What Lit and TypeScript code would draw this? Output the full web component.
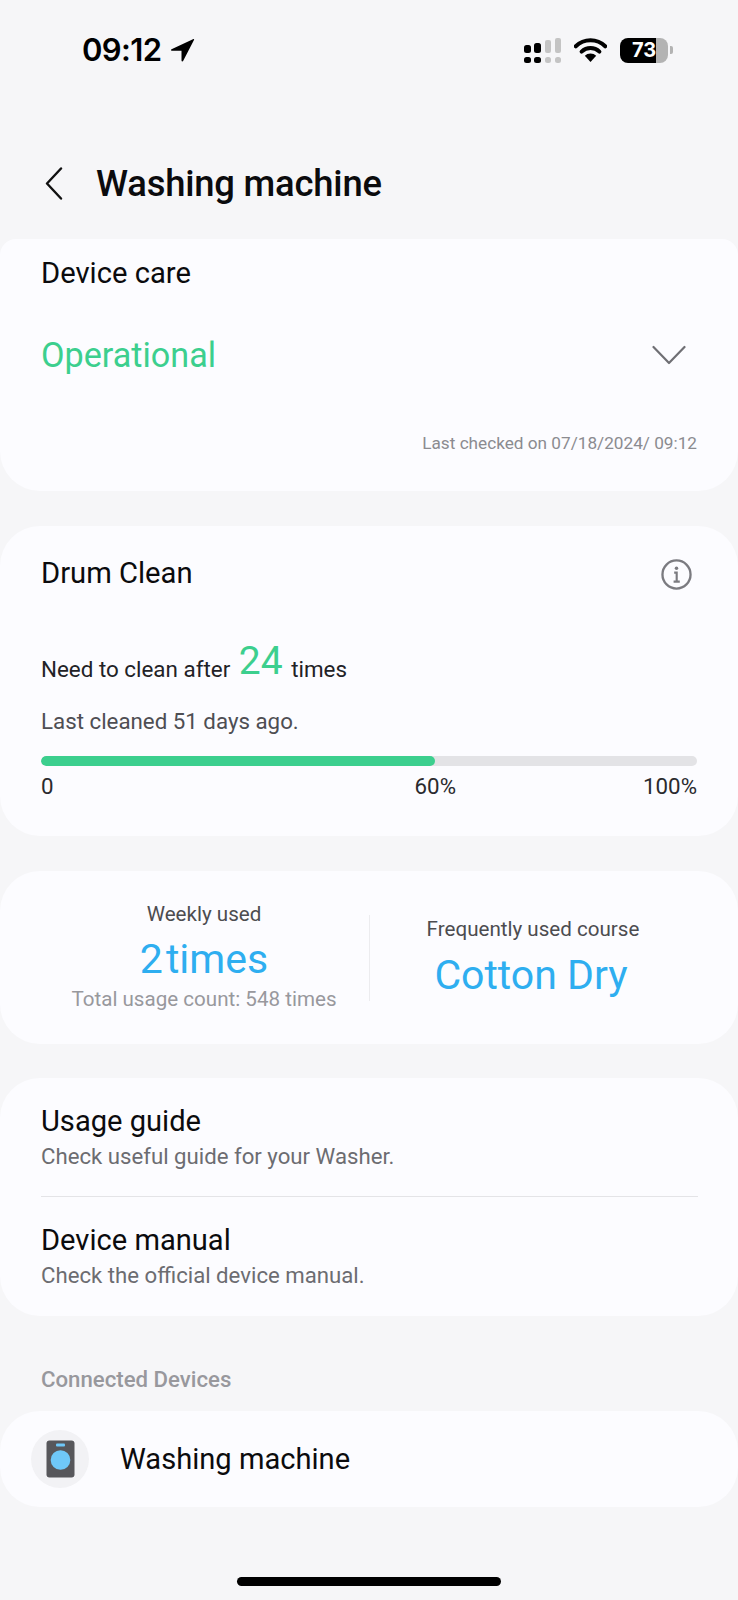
import { LitElement, html, css } from 'lit';
import { customElement } from 'lit/decorators.js';

@customElement('app-root')
export class AppRoot extends LitElement {
  static styles = css`
    :host {
      display: block;
      width: 738px;
      height: 1600px;
      overflow: hidden;
      background: #f6f6f8;
      font-family: Roboto, 'Liberation Sans', sans-serif;
      color: #0b0b0d;
    }

    .status {
      height: 100px;
      box-sizing: border-box;
      padding: 31px 65px 0 82px;
      display: flex;
      justify-content: space-between;
      align-items: flex-start;
    }
    .time {
      display: flex;
      align-items: center;
      gap: 8px;
      font-family: Inter, sans-serif;
      font-size: 31px;
      line-height: 38px;
      font-weight: 600;
      letter-spacing: -0.6px;
      color: #000;
    }
    .indicators {
      display: flex;
      align-items: center;
      gap: 13px;
      height: 38px;
    }
    .battery {
      width: 48px;
      height: 25px;
      border-radius: 8px;
      overflow: hidden;
      background: linear-gradient(90deg, #000 0 75%, #b3b3b3 75%);
      color: #fff;
      font-family: Inter, sans-serif;
      font-size: 20px;
      font-weight: 700;
      line-height: 25px;
      text-align: center;
    }
    .nub {
      width: 3px;
      height: 8px;
      margin-left: -11px;
      border-radius: 0 2px 2px 0;
      background: #b3b3b3;
    }

    .header {
      height: 139px;
      box-sizing: border-box;
      padding: 28px 0 0 45px;
      display: flex;
      align-items: center;
      gap: 33px;
    }
    .header svg { display: block; }
    h1 {
      margin: 0;
      font-size: 36.4px;
      font-weight: 500;
      letter-spacing: -0.2px;
    }

    .card {
      background: #fcfcff;
      border-radius: 40px;
      margin-bottom: 35px;
      box-sizing: border-box;
    }

    .care {
      height: 252px;
      padding: 16px 41px 0 41px;
      border-radius: 16px 16px 40px 40px;
    }
    .card-title { font-size: 29.2px; line-height: 36px; }
    .care-row {
      display: flex;
      justify-content: space-between;
      align-items: center;
      margin-top: 42px;
      padding-right: 11px;
    }
    .operational { font-size: 34.2px; line-height: 44px; color: #3ccf8e; }
    .checked {
      margin-top: 54px;
      text-align: right;
      font-size: 17.2px;
      line-height: 24px;
      color: #8b8b90;
    }

    .drum {
      height: 310px;
      padding: 29px 41px 0 41px;
    }
    .drum-head {
      display: flex;
      justify-content: space-between;
      align-items: center;
      padding-right: 5px;
    }
    .drum-head svg { margin-top: 2px; }
    .need {
      margin-top: 44px;
      font-size: 22.4px;
      line-height: 52px;
      color: #222226;
    }
    .need b { font-weight: 400; font-size: 39px; color: #3ccf8e; margin: 0 3px; vertical-align: 3px; }
    .last { margin-top: 11px; font-size: 22.3px; line-height: 30px; color: #4e4e53; }
    .track {
      height: 10px;
      margin-top: 20px;
      border-radius: 5px;
      background: #e3e3e6;
      overflow: hidden;
    }
    .fill { height: 100%; background: #3ccf8e; border-radius: 5px; }
    .scale {
      display: flex;
      margin-top: 6px;
      font-size: 22.3px;
      line-height: 28px;
      color: #2a2a2e;
    }
    .scale span:nth-child(1) { width: 0; }
    .scale span:nth-child(2) { margin-left: calc(60% - 20px); }
    .scale span:nth-child(3) { margin-left: auto; }

    .usage {
      height: 173px;
      margin-bottom: 34px;
      display: grid;
      grid-template-columns: 369px 1px 1fr;
      align-items: center;
    }
    .stat {
      display: flex;
      flex-direction: column;
      align-items: center;
      margin-top: -3px;
      padding-left: 39px;
    }
    .stat.right { margin-top: 0; padding: 0 46px 0 0; }
    .stat-label { font-size: 20.6px; line-height: 28px; color: #4c4c50; }
    .stat.right .stat-label { margin-left: 4px; }
    .stat-value { font-size: 41px; line-height: 52px; color: #2eaef0; margin-top: 5px; }
    .stat-value i { font-style: normal; margin-right: 3px; }
    .stat.right .stat-value { margin-top: 6px; }
    .stat-note { font-size: 20.6px; line-height: 26px; color: #98989d; margin-top: 1px; }
    .divider { height: 86px; background: #ececef; }

    .links { height: 238px; padding: 0 40px 0 41px; }
    .link { height: 118px; box-sizing: border-box; padding-top: 25px; }
    .link + .link { border-top: 1px solid #e4e4e7; height: 120px; padding-top: 25px; }
    .link-title { font-size: 29.1px; line-height: 36px; }
    .link-sub { font-size: 22.2px; line-height: 28px; color: #6c6c71; margin-top: 3px; }

    .section {
      margin: 49px 0 18px 41px;
      font-size: 22.2px;
      line-height: 28px;
      font-weight: 500;
      color: #98989d;
    }

    .device {
      height: 96px;
      padding-left: 31px;
      display: flex;
      align-items: center;
      gap: 31px;
      font-size: 29.1px;
    }
    .device-icon {
      width: 58px;
      height: 58px;
      border-radius: 50%;
      background: #f2f2f5;
      display: flex;
      align-items: center;
      justify-content: center;
    }

    .home {
      width: 264px;
      height: 9px;
      margin: 70px auto 0;
      border-radius: 5px;
      background: #000;
    }
  `;

  render() {
    return html`
      <div class="status">
        <div class="time">
          09:12
          <svg width="25" height="24" viewBox="0 0 24 24">
            <path d="M23 1 1 11.2c-.9.4-.6 1.5.3 1.5H11v9.8c0 1 1.2 1.2 1.6.4L23.6 1.7c.2-.5-.2-.9-.6-.7z" fill="#000" />
          </svg>
        </div>
        <div class="indicators">
          <svg width="37" height="25" viewBox="0 0 37 25">
            <rect x="0" y="7" width="7" height="8" rx="2.5" fill="#000" />
            <rect x="10" y="5" width="7" height="10" rx="2.5" fill="#000" />
            <rect x="21" y="2" width="6" height="13" rx="2" fill="#c4c4c4" />
            <rect x="31" y="0" width="6" height="15" rx="2" fill="#c4c4c4" />
            <rect x="0" y="19" width="7" height="6" rx="2.5" fill="#000" />
            <rect x="10" y="19" width="7" height="6" rx="2.5" fill="#000" />
            <rect x="21" y="19" width="6" height="6" rx="2.5" fill="#c4c4c4" />
            <rect x="31" y="19" width="6" height="6" rx="2.5" fill="#c4c4c4" />
          </svg>
          <svg width="33" height="24" viewBox="0 0 33 24">
            <path d="M1.8 8.3a21 21 0 0 1 29.4 0" fill="none" stroke="#000" stroke-width="4" stroke-linecap="round" />
            <path d="M7.6 13.6a13 13 0 0 1 17.8 0" fill="none" stroke="#000" stroke-width="4" stroke-linecap="round" />
            <path d="M10.8 17.8a8 8 0 0 1 11.4 0L16.5 24z" fill="#000" />
          </svg>
          <div class="battery">73</div>
          <div class="nub"></div>
        </div>
      </div>

      <div class="header">
        <svg width="18" height="33" viewBox="0 0 18 33">
          <path d="M16 1.5 2 16.5l14 15" fill="none" stroke="#111" stroke-width="2.4" stroke-linecap="round" stroke-linejoin="round" />
        </svg>
        <h1>Washing machine</h1>
      </div>

      <div class="card care">
        <div class="card-title">Device care</div>
        <div class="care-row">
          <span class="operational">Operational</span>
          <svg width="34" height="20" viewBox="0 0 34 20">
            <path d="M1.5 2 17 18 32.5 2" fill="none" stroke="#6f6f74" stroke-width="2.2" stroke-linecap="round" stroke-linejoin="round" />
          </svg>
        </div>
        <div class="checked">Last checked on 07/18/2024/ 09:12</div>
      </div>

      <div class="card drum">
        <div class="drum-head">
          <span class="card-title">Drum Clean</span>
          <svg width="31" height="31" viewBox="0 0 32 32">
            <circle cx="16" cy="16" r="14.5" fill="none" stroke="#7b7b80" stroke-width="2.4" />
            <circle cx="16" cy="9.5" r="1.8" fill="#7b7b80" />
            <path d="M13.6 14H16.2V23M13 23.4H19.4" fill="none" stroke="#7b7b80" stroke-width="2.2" />
          </svg>
        </div>
        <div class="need">Need to clean after <b>24</b> times</div>
        <div class="last">Last cleaned 51 days ago.</div>
        <div class="track"><div class="fill" style="width: 60%"></div></div>
        <div class="scale"><span>0</span><span>60%</span><span>100%</span></div>
      </div>

      <div class="card usage">
        <div class="stat">
          <span class="stat-label">Weekly used</span>
          <span class="stat-value"><i>2</i>times</span>
          <span class="stat-note">Total usage count: 548 times</span>
        </div>
        <div class="divider"></div>
        <div class="stat right">
          <span class="stat-label">Frequently used course</span>
          <span class="stat-value">Cotton Dry</span>
        </div>
      </div>

      <div class="card links">
        <div class="link">
          <div class="link-title">Usage guide</div>
          <div class="link-sub">Check useful guide for your Washer.</div>
        </div>
        <div class="link">
          <div class="link-title">Device manual</div>
          <div class="link-sub">Check the official device manual.</div>
        </div>
      </div>

      <div class="section">Connected Devices</div>

      <div class="card device">
        <div class="device-icon">
          <svg width="29" height="38" viewBox="0 0 29 38">
            <rect x="0.5" y="0.5" width="28" height="37" rx="3" fill="#57575b" />
            <rect x="10" y="3.5" width="9" height="3" rx="1" fill="#6fc8f8" />
            <circle cx="14.5" cy="20" r="9.8" fill="#6fc8f8" />
          </svg>
        </div>
        <span>Washing machine</span>
      </div>

      <div class="home"></div>
    `;
  }
}
